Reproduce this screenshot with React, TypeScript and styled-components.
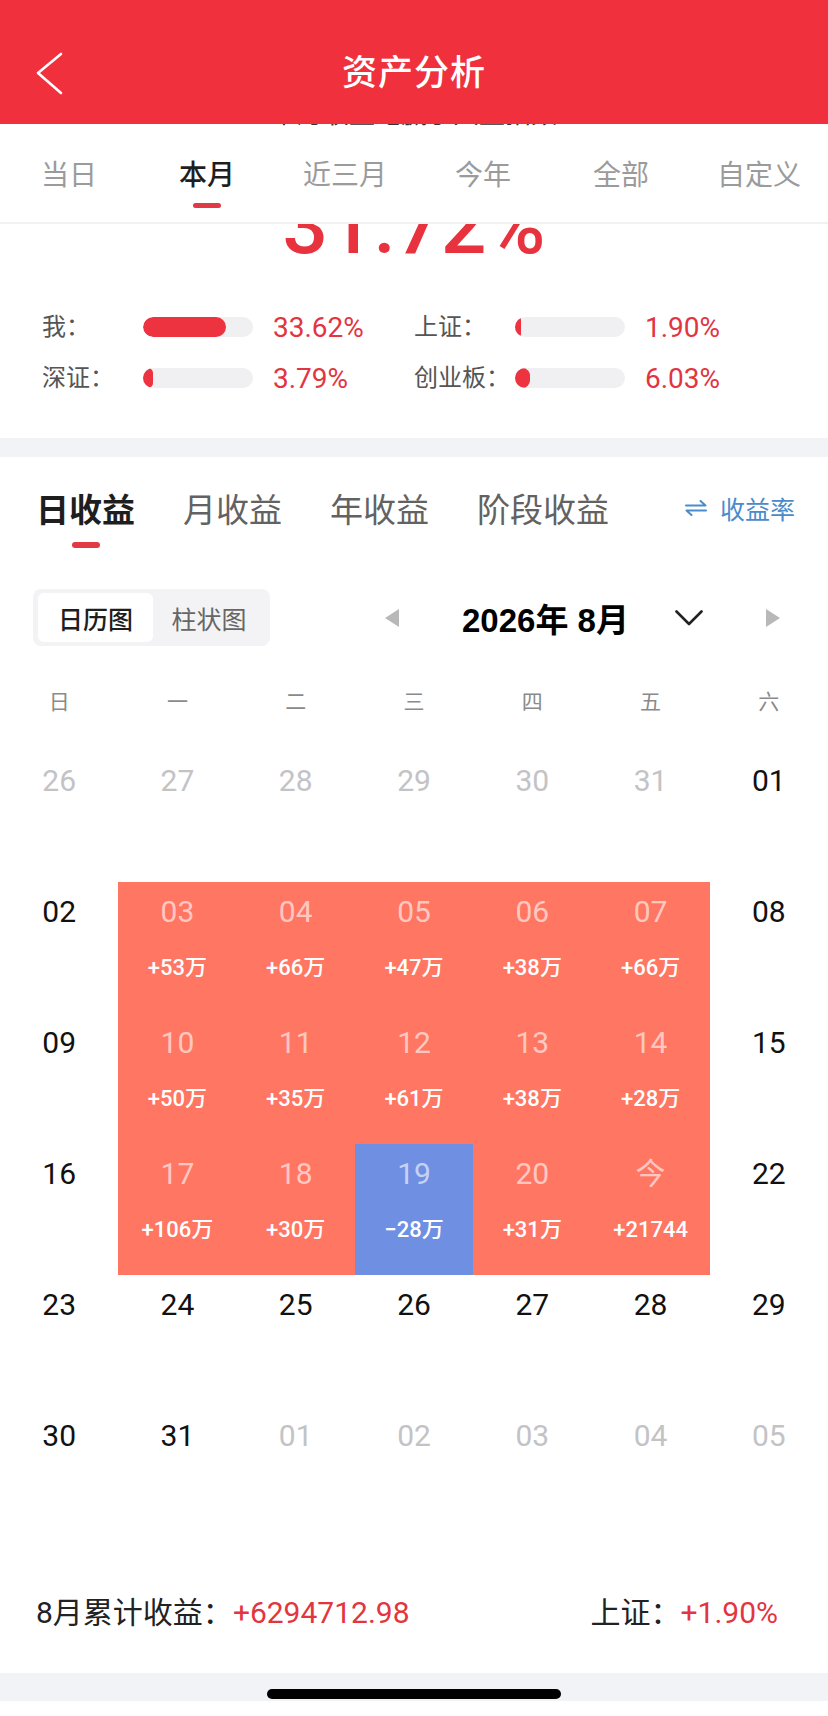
import React from "react";
import styled, { createGlobalStyle } from "styled-components";

const CJK = `"Noto Sans CJK SC", "Noto Sans", sans-serif`;
const NUM = `Roboto, "Noto Sans CJK SC", sans-serif`;
const RED = "#F0313D";
const RED_TEXT = "#E3353F";

const GlobalStyle = createGlobalStyle`
  html, body { margin: 0; padding: 0; background: #fff; }
  body { font-family: ${CJK}; -webkit-font-smoothing: antialiased; }
  * { box-sizing: border-box; }
`;

const Page = styled.div`
  width: 828px;
  height: 1716px;
  overflow: hidden;
  background: #fff;
  display: flex;
  flex-direction: column;
`;

/* ---------- Header ---------- */
const Header = styled.header`
  height: 124px;
  flex: none;
  background: ${RED};
  display: grid;
  grid-template-columns: 120px 1fr 120px;
  align-items: center;
  padding-top: 16px;
`;

const BackButton = styled.div`
  margin-left: 34px;
  margin-top: 8px;
  width: 32px;
  height: 44px;
  display: flex;
  align-items: center;
`;

const Title = styled.h1`
  margin: 0;
  text-align: center;
  color: #fff;
  font-family: ${CJK};
  font-size: 35px;
  font-weight: 500;
  line-height: 48px;
  letter-spacing: 1px;
`;

/* clipped scrolled content peeking under the header */
const PeekStrip = styled.div`
  height: 4px;
  flex: none;
  overflow: hidden;
  display: flex;
  justify-content: center;
`;

const PeekText = styled.div`
  margin-top: -27px;
  font-size: 26px;
  line-height: 30px;
  color: #333;
  white-space: nowrap;
`;

/* ---------- Period tabs ---------- */
const PeriodTabs = styled.nav`
  flex: none;
  height: 96px;
  display: grid;
  grid-template-columns: repeat(6, 1fr);
  border-bottom: 2px solid #f1f1f3;
`;

const PeriodTab = styled.div<{ $active?: boolean }>`
  display: flex;
  flex-direction: column;
  align-items: center;
  padding-top: 25px;
  font-size: 28px;
  line-height: 40px;
  color: ${(p) => (p.$active ? "#1e1e1e" : "#9b9b9b")};
  font-weight: ${(p) => (p.$active ? 500 : 400)};

  &::after {
    content: "";
    width: 28px;
    height: 5px;
    margin-top: 10px;
    border-radius: 3px;
    background: ${(p) => (p.$active ? "#E23A44" : "transparent")};
  }
`;

/* ---------- Summary ---------- */
const Summary = styled.section`
  flex: none;
  overflow: hidden;
  display: flex;
  flex-direction: column;
  padding-bottom: 40px;
`;

const BigValue = styled.div`
  margin-top: -38px;
  text-align: center;
  font-family: ${NUM};
  font-size: 80px;
  font-weight: 500;
  line-height: 80px;
  color: #E8333F;
`;

const StatsGrid = styled.div`
  margin-top: 41px;
  padding-left: 42px;
  display: grid;
  grid-template-columns: 372px 372px;
  row-gap: 11px;
`;

const StatItem = styled.div`
  display: flex;
  align-items: center;
  height: 40px;
`;

const StatLabel = styled.span`
  width: 101px;
  font-size: 24px;
  line-height: 36px;
  margin-top: -4px;
  color: #555;
`;

const Track = styled.div`
  width: 110px;
  height: 20px;
  border-radius: 10px;
  background: #f0f0f2;
  overflow: hidden;
`;

const Fill = styled.div<{ $pct: number }>`
  height: 100%;
  width: ${(p) => p.$pct}%;
  border-radius: 10px;
  background: #EE3340;
`;

const StatValue = styled.span`
  margin-left: 20px;
  font-family: ${NUM};
  font-size: 28px;
  color: ${RED_TEXT};
`;

const Band = styled.div<{ $h: number }>`
  flex: none;
  height: ${(p) => p.$h}px;
  background: #f2f3f7;
`;

/* ---------- Income tabs ---------- */
const IncomeTabs = styled.nav`
  flex: none;
  display: flex;
  align-items: flex-start;
  padding: 29px 33px 0 36px;
`;

const IncomeTab = styled.div<{ $active?: boolean }>`
  display: flex;
  flex-direction: column;
  align-items: center;
  margin-right: 48px;
  font-size: 33px;
  line-height: 44px;
  color: ${(p) => (p.$active ? "#1e1e1e" : "#626262")};
  font-weight: ${(p) => (p.$active ? 700 : 400)};

  &::after {
    content: "";
    width: 28px;
    height: 6px;
    margin-top: 12px;
    border-radius: 3px;
    background: ${(p) => (p.$active ? "#E23A44" : "transparent")};
  }
`;

const RateLink = styled.div`
  margin-left: auto;
  display: flex;
  align-items: center;
  gap: 13px;
  height: 44px;
  color: #4A8BCC;
  font-size: 25px;
`;

/* ---------- Toolbar ---------- */
const Toolbar = styled.div`
  flex: none;
  margin-top: 41px;
  padding-left: 33px;
  height: 57px;
  display: flex;
  align-items: center;
`;

const Toggle = styled.div`
  display: flex;
  height: 57px;
  padding: 4px 5px;
  background: #f3f3f5;
  border-radius: 8px;
`;

const Segment = styled.div<{ $active?: boolean; $w: number }>`
  width: ${(p) => p.$w}px;
  height: 49px;
  display: flex;
  align-items: center;
  justify-content: center;
  border-radius: 6px;
  font-size: 25px;
  background: ${(p) => (p.$active ? "#fff" : "transparent")};
  color: ${(p) => (p.$active ? "#1e1e1e" : "#666")};
  font-weight: ${(p) => (p.$active ? 500 : 400)};
`;

const NavIcon = styled.div<{ $ml: number }>`
  margin-left: ${(p) => p.$ml}px;
  display: flex;
  align-items: center;
`;

const MonthTitle = styled.div`
  margin-left: 63px;
  width: 169px;
  white-space: nowrap;
  font-family: "Liberation Sans", "Noto Sans CJK SC", sans-serif;
  font-size: 33px;
  font-weight: 700;
  color: #000;
`;

/* ---------- Calendar ---------- */
const WeekRow = styled.div`
  flex: none;
  margin-top: 34px;
  height: 40px;
  display: grid;
  grid-template-columns: repeat(7, 1fr);
  text-align: center;
  font-size: 21px;
  line-height: 40px;
  color: #8a8a8a;
`;

const CalendarGrid = styled.div`
  flex: none;
  margin-top: 31px;
  display: grid;
  grid-template-columns: repeat(7, 1fr);
  grid-auto-rows: 131px;
`;

type Tone = "none" | "up" | "down";
type NumKind = "muted" | "normal" | "onColor";

const DayCell = styled.div<{ $tone: Tone }>`
  display: flex;
  flex-direction: column;
  align-items: center;
  padding-top: 12px;
  background: ${(p) =>
    p.$tone === "up" ? "#FF7662" : p.$tone === "down" ? "#6F8FE2" : "transparent"};
`;

const DayNum = styled.div<{ $kind: NumKind }>`
  font-family: ${NUM};
  font-size: 30px;
  line-height: 36px;
  color: ${(p) =>
    p.$kind === "muted"
      ? "#c3c3c6"
      : p.$kind === "onColor"
      ? "rgba(255,255,255,0.62)"
      : "#111"};
`;

const DayValue = styled.div`
  margin-top: 23px;
  font-family: ${NUM};
  font-size: 22px;
  font-weight: 500;
  line-height: 30px;
  color: #fff;
  white-space: nowrap;
`;

/* ---------- Footer ---------- */
const Footer = styled.footer`
  flex: none;
  height: 136px;
  padding: 56px 50px 0 36px;
  display: flex;
  justify-content: space-between;
  align-items: flex-start;
  font-size: 30px;
  line-height: 40px;
`;

const FooterItem = styled.div`
  display: flex;
  align-items: center;
  color: #222;
  white-space: nowrap;
`;

const FooterLabel = styled.span`
  font-family: ${NUM};
`;

const FooterValue = styled.span`
  font-family: ${NUM};
  color: ${RED_TEXT};
`;

const BottomBar = styled.div`
  flex: none;
  height: 28px;
  background: #f2f3f7;
  display: flex;
  justify-content: center;
  padding-top: 16px;
`;

const HomeIndicator = styled.div`
  width: 294px;
  height: 10px;
  border-radius: 5px;
  background: #000;
`;

/* ---------- Data ---------- */
const periods = ["当日", "本月", "近三月", "今年", "全部", "自定义"];
const incomeTabs = ["日收益", "月收益", "年收益", "阶段收益"];
const weekdays = ["日", "一", "二", "三", "四", "五", "六"];

const stats = [
  { label: "我：", pct: 75, value: "33.62%" },
  { label: "上证：", pct: 5.5, value: "1.90%" },
  { label: "深证：", pct: 9, value: "3.79%" },
  { label: "创业板：", pct: 14, value: "6.03%" },
];

type Day = { n: string; kind: NumKind; tone: Tone; v?: string };

const m = (n: string): Day => ({ n, kind: "muted", tone: "none" });
const d = (n: string): Day => ({ n, kind: "normal", tone: "none" });
const up = (n: string, v: string): Day => ({ n, kind: "onColor", tone: "up", v });
const dn = (n: string, v: string): Day => ({ n, kind: "onColor", tone: "down", v });

const days: Day[] = [
  m("26"), m("27"), m("28"), m("29"), m("30"), m("31"), d("01"),
  d("02"), up("03", "+53万"), up("04", "+66万"), up("05", "+47万"), up("06", "+38万"), up("07", "+66万"), d("08"),
  d("09"), up("10", "+50万"), up("11", "+35万"), up("12", "+61万"), up("13", "+38万"), up("14", "+28万"), d("15"),
  d("16"), up("17", "+106万"), up("18", "+30万"), dn("19", "−28万"), up("20", "+31万"), up("今", "+21744"), d("22"),
  d("23"), d("24"), d("25"), d("26"), d("27"), d("28"), d("29"),
  d("30"), d("31"), m("01"), m("02"), m("03"), m("04"), m("05"),
];

export default function App() {
  return (
    <>
      <GlobalStyle />
      <Page>
        <Header>
          <BackButton>
            <svg width="30" height="44" viewBox="0 0 30 44" fill="none">
              <path d="M27 2 L4 21 L27 41" stroke="#fff" strokeWidth="2.6" strokeLinecap="round" strokeLinejoin="round" />
            </svg>
          </BackButton>
          <Title>资产分析</Title>
          <div />
        </Header>

        <PeekStrip>
          <PeekText>本月收益跑赢了大盘指数</PeekText>
        </PeekStrip>

        <PeriodTabs>
          {periods.map((p) => (
            <PeriodTab key={p} $active={p === "本月"}>
              {p}
            </PeriodTab>
          ))}
        </PeriodTabs>

        <Summary>
          <BigValue>31.72%</BigValue>
          <StatsGrid>
            {stats.map((s) => (
              <StatItem key={s.label}>
                <StatLabel>{s.label}</StatLabel>
                <Track>
                  <Fill $pct={s.pct} />
                </Track>
                <StatValue>{s.value}</StatValue>
              </StatItem>
            ))}
          </StatsGrid>
        </Summary>

        <Band $h={19} />

        <IncomeTabs>
          {incomeTabs.map((t) => (
            <IncomeTab key={t} $active={t === "日收益"}>
              {t}
            </IncomeTab>
          ))}
          <RateLink>
            <svg width="22" height="16" viewBox="0 0 22 16" fill="none">
              <path d="M1 5.5 H20.5 L15.5 1" stroke="#4A8BCC" strokeWidth="2" strokeLinecap="round" strokeLinejoin="round" />
              <path d="M21 10.5 H1.5 L6.5 15" stroke="#4A8BCC" strokeWidth="2" strokeLinecap="round" strokeLinejoin="round" />
            </svg>
            <span>收益率</span>
          </RateLink>
        </IncomeTabs>

        <Toolbar>
          <Toggle>
            <Segment $active $w={115}>日历图</Segment>
            <Segment $w={112}>柱状图</Segment>
          </Toggle>
          <NavIcon $ml={115}>
            <svg width="14" height="18" viewBox="0 0 14 18">
              <path d="M14 0 L0 9 L14 18 Z" fill="#b8b8b8" />
            </svg>
          </NavIcon>
          <MonthTitle>2026年 8月</MonthTitle>
          <NavIcon $ml={44}>
            <svg width="28" height="16" viewBox="0 0 28 16" fill="none">
              <path d="M1.5 1.5 L14 14 L26.5 1.5" stroke="#222" strokeWidth="2.6" strokeLinecap="round" strokeLinejoin="round" />
            </svg>
          </NavIcon>
          <NavIcon $ml={63}>
            <svg width="14" height="18" viewBox="0 0 14 18">
              <path d="M0 0 L14 9 L0 18 Z" fill="#b8b8b8" />
            </svg>
          </NavIcon>
        </Toolbar>

        <WeekRow>
          {weekdays.map((w) => (
            <span key={w}>{w}</span>
          ))}
        </WeekRow>

        <CalendarGrid>
          {days.map((day, i) => (
            <DayCell key={i} $tone={day.tone}>
              <DayNum $kind={day.kind}>{day.n}</DayNum>
              {day.v && <DayValue>{day.v}</DayValue>}
            </DayCell>
          ))}
        </CalendarGrid>

        <Footer>
          <FooterItem>
            <FooterLabel>8月累计收益：</FooterLabel>
            <FooterValue>+6294712.98</FooterValue>
          </FooterItem>
          <FooterItem>
            <FooterLabel>上证：</FooterLabel>
            <FooterValue>+1.90%</FooterValue>
          </FooterItem>
        </Footer>

        <BottomBar>
          <HomeIndicator />
        </BottomBar>
      </Page>
    </>
  );
}
